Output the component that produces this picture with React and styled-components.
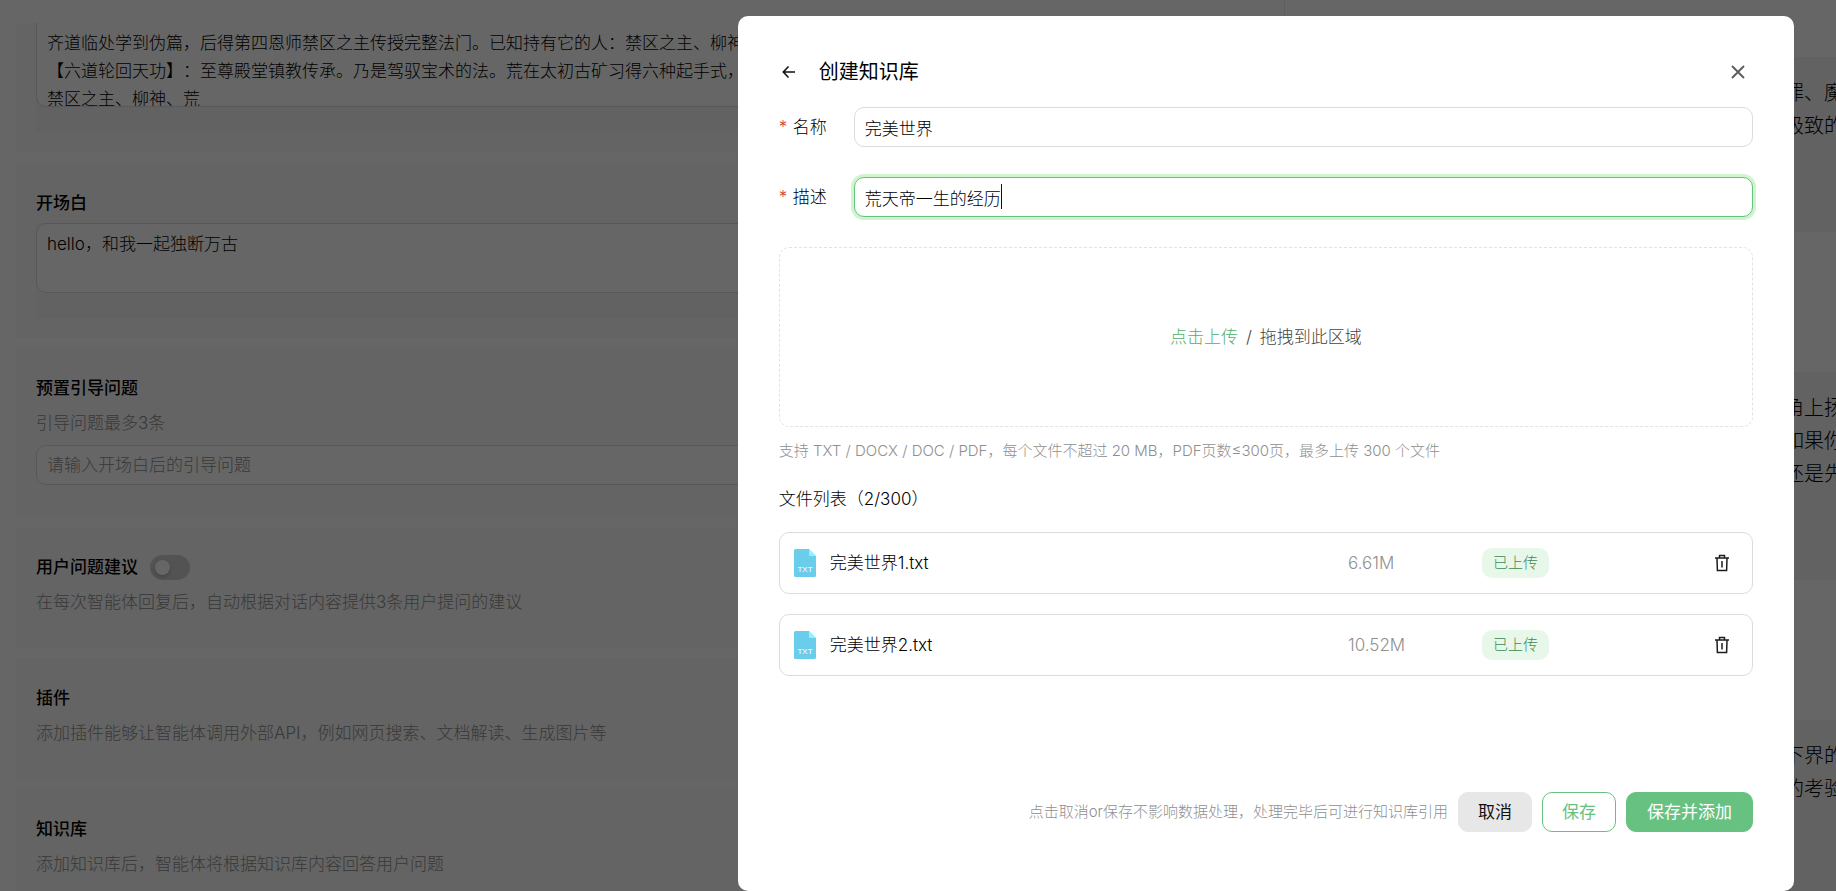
import React, { useEffect, useRef, useState } from "react";
import styled, { createGlobalStyle } from "styled-components";

const openingSetting = [
  "人，其他至尊殿堂的传承者亦有所得，但皆是残篇，后来荒于仙古遗地之中寻回。此法为至高秘术，",
  "齐道临处学到伪篇，后得第四恩师禁区之主传授完整法门。已知持有它的人：禁区之主、柳神、荒",
  "【六道轮回天功】：至尊殿堂镇教传承。乃是驾驭宝术的法。荒在太初古矿习得六种起手式，",
  "禁区之主、柳神、荒",
].join("\n");

const messages = [
  ["罪、魔", "极致的"],
  ["角上扬", "如果你", "还是先"],
  ["下界的", "的考验"],
];

const initialFiles = [
  { id: 1, name: "完美世界1.txt", size: "6.61M" },
  { id: 2, name: "完美世界2.txt", size: "10.52M" },
];

const TxtIcon = () => (
  <svg width="22" height="30" viewBox="0 0 22 30" aria-hidden="true">
    <path
      d="M1.500 1H15l7 7v19.500a1.500 1.500 0 0 1-1.500 1.500h-19A1.500 1.500 0 0 1 0 27.500v-25A1.500 1.500 0 0 1 1.500 1z"
      fill="#6bcdec"
    />
    <path d="M15 1l7 7h-5.500A1.500 1.500 0 0 1 15 6.500z" fill="#98f0ff" />
    <text
      x="11"
      y="24"
      fill="#fff"
      fontSize="8"
      fontWeight="400"
      textAnchor="middle"
      fontFamily="Liberation Sans"
    >
      TXT
    </text>
  </svg>
);

const TrashIcon = () => (
  <svg
    width="16"
    height="18"
    viewBox="0 0 16 18"
    fill="none"
    stroke="#1d1d1f"
    strokeWidth="1.500"
    aria-hidden="true"
  >
    <path d="M1 4h14M5.500 3.500V1.500h5v2M3 4.500l.4 12h9.200l.4-12M8 7v6.500" />
  </svg>
);

const BackIcon = () => (
  <svg
    width="14"
    height="14"
    viewBox="0 0 14 14"
    fill="none"
    stroke="#111"
    strokeWidth="1.600"
    aria-hidden="true"
  >
    <path d="M13 7H1.500M6.500 1.500L1.300 7l5.200 5.500" />
  </svg>
);

const CloseIcon = () => (
  <svg
    width="14"
    height="14"
    viewBox="0 0 14 14"
    fill="none"
    stroke="#5c5c5c"
    strokeWidth="1.900"
    aria-hidden="true"
  >
    <path d="M1 1l12 12M13 1L1 13" />
  </svg>
);

const SettingsPanel = () => {
  const settingRef = useRef(null);

  // leave the last line half hidden behind the bottom edge
  useEffect(() => {
    const area = settingRef.current;
    area.scrollTop = area.scrollHeight - area.clientHeight - 7;
  }, []);

  return (
    <Settings>
      <Card>
        <Field>
          <SettingText
            ref={settingRef}
            aria-label="设定"
            defaultValue={openingSetting}
          />
        </Field>
      </Card>
      <Card $bottom={20}>
        <CardTitle as="label" htmlFor="opening">
          开场白
        </CardTitle>
        <Field $spaced>
          <OpeningText id="opening" defaultValue="hello，和我一起独断万古" />
        </Field>
      </Card>
      <Card $bottom={32}>
        <CardTitle as="label" htmlFor="guide">
          预置引导问题
        </CardTitle>
        <CardNote>引导问题最多3条</CardNote>
        <GuideInput id="guide" placeholder="请输入开场白后的引导问题" />
      </Card>
      <Card $bottom={32}>
        <TitleRow>
          <CardTitle as="label" htmlFor="suggest">
            用户问题建议
          </CardTitle>
          <Switch id="suggest" type="checkbox" role="switch" />
        </TitleRow>
        <CardNote>
          在每次智能体回复后，自动根据对话内容提供3条用户提问的建议
        </CardNote>
      </Card>
      <Card $bottom={32}>
        <CardTitle>插件</CardTitle>
        <CardNote>
          添加插件能够让智能体调用外部API，例如网页搜索、文档解读、生成图片等
        </CardNote>
      </Card>
      <Card $bottom={32}>
        <CardTitle>知识库</CardTitle>
        <CardNote>添加知识库后，智能体将根据知识库内容回答用户问题</CardNote>
      </Card>
    </Settings>
  );
};

const CreateDialog = () => {
  const [name, setName] = useState("完美世界");
  const [desc, setDesc] = useState("荒天帝一生的经历");
  const [files, setFiles] = useState(initialFiles);
  const descRef = useRef(null);

  useEffect(() => {
    const input = descRef.current;
    input.focus();
    input.setSelectionRange(input.value.length, input.value.length);
  }, []);

  return (
    <Dialog role="dialog" aria-modal="true" aria-labelledby="dialog-title">
      <Header>
        <IconButton aria-label="返回">
          <BackIcon />
        </IconButton>
        <h2 id="dialog-title">创建知识库</h2>
        <IconButton aria-label="关闭" $wide>
          <CloseIcon />
        </IconButton>
      </Header>
      <FormRow>
        <Label htmlFor="kb-name">名称</Label>
        <InputBox>
          <TextInput
            id="kb-name"
            value={name}
            onChange={(e) => setName(e.target.value)}
          />
        </InputBox>
      </FormRow>
      <FormRow>
        <Label htmlFor="kb-desc">描述</Label>
        <InputBox>
          <TextInput
            id="kb-desc"
            ref={descRef}
            value={desc}
            onChange={(e) => setDesc(e.target.value)}
          />
          <Caret style={{ left: 11 + desc.length * 17 }} />
        </InputBox>
      </FormRow>
      <DropZone>
        <strong>点击上传</strong>
        <span>/</span>
        <span>拖拽到此区域</span>
      </DropZone>
      <UploadHint>
        支持 TXT / DOCX / DOC / PDF，每个文件不超过 20
        MB，PDF页数≤300页，最多上传 300 个文件
      </UploadHint>
      <ListTitle>文件列表（{files.length}/300）</ListTitle>
      <FileList>
        {files.map((file) => (
          <FileRow key={file.id}>
            <FileName>
              <TxtIcon />
              {file.name}
            </FileName>
            <FileSize>{file.size}</FileSize>
            <Status>已上传</Status>
            <IconButton
              aria-label="删除"
              onClick={() => setFiles(files.filter((f) => f.id !== file.id))}
            >
              <TrashIcon />
            </IconButton>
          </FileRow>
        ))}
      </FileList>
      <Footer>
        <Hint>点击取消or保存不影响数据处理，处理完毕后可进行知识库引用</Hint>
        <Button>取消</Button>
        <Button $variant="outline">保存</Button>
        <Button $variant="primary">保存并添加</Button>
      </Footer>
    </Dialog>
  );
};

const App = () => {
  return (
    <>
      <GlobalStyle />
      <Page>
        <SettingsPanel />
        <Chat>
          {messages.map((lines) => (
            <Bubble key={lines[0]} $lines={lines.length}>
              {lines.map((line) => (
                <p key={line}>{line}</p>
              ))}
            </Bubble>
          ))}
        </Chat>
      </Page>
      <Overlay>
        <CreateDialog />
      </Overlay>
    </>
  );
};

const GlobalStyle = createGlobalStyle`
  * {
    box-sizing: border-box;
  }
  body {
    margin: 0;
    overflow: hidden;
    background: #fff;
  }
  body, input, textarea, button {
    font-family: Inter, "Noto Sans CJK SC", sans-serif;
    font-size: 17px;
    font-weight: 300;
    line-height: 28px;
    text-spacing-trim: space-all;
    color: #000;
  }
  h2, h3, p, ul {
    margin: 0;
    padding: 0;
  }
`;

const Page = styled.div`
  height: 100vh;
  display: grid;
  grid-template-columns: 7fr 3fr;
  overflow: hidden;
`;

const Settings = styled.main`
  padding: 23px 16px 0;
  display: flex;
  flex-direction: column;
  gap: 10px;
  overflow: hidden;
  border-right: 1px solid #ececec;
`;

const Card = styled.section`
  flex: none;
  padding: ${(props) =>
    props.$bottom ? `26px 20px ${props.$bottom}px` : "0 20px 21px"};
  background: #fafafa;
`;

const CardTitle = styled.h3`
  display: block;
  font-size: 17px;
  font-weight: 500;
  line-height: 28px;
  color: #000;
`;

const CardNote = styled.p`
  margin-top: 7px;
  color: #8f8f8f;
`;

const TitleRow = styled.div`
  display: flex;
  align-items: center;
  gap: 12px;
`;

const Field = styled.div`
  margin-top: ${(props) => (props.$spaced ? 6 : 0)}px;
  padding-bottom: 25px;
  background: #f5f5f5;
`;

const SettingText = styled.textarea`
  display: block;
  width: 100%;
  height: 84px;
  padding: 0 10px;
  border: 1px solid #dcdcdc;
  border-top: 0;
  border-radius: 0 0 10px 10px;
  resize: none;
  overflow: hidden;
  white-space: pre;
`;

const OpeningText = styled.textarea`
  display: block;
  width: 100%;
  height: 70px;
  padding: 6px 10px;
  border: 1px solid #dcdcdc;
  border-radius: 10px;
  resize: none;
`;

const GuideInput = styled.input`
  width: 100%;
  height: 40px;
  margin-top: 8px;
  padding: 0 10px;
  border: 1px solid #dcdcdc;
  border-radius: 10px;
  background: #fff;

  &::placeholder {
    color: #8f8f8f;
  }
`;

const Switch = styled.input`
  appearance: none;
  display: flex;
  align-items: center;
  width: 40px;
  height: 25px;
  margin: 0;
  padding: 0 5px;
  border-radius: 13px;
  background: #d0d0d0;

  &::before {
    content: "";
    width: 15px;
    height: 15px;
    border-radius: 50%;
    background: #fff;
    box-shadow: 0 2px 4px rgba(0, 0, 0, 0.2);
  }
`;

const Chat = styled.aside`
  padding-top: 57px;
  display: flex;
  flex-direction: column;
  gap: 140px;
  overflow: hidden;
`;

const Bubble = styled.article`
  flex: none;
  height: ${(props) => (props.$lines === 3 ? 208 : 175)}px;
  padding-top: 20px;
  background: #f4f4f4;

  p {
    margin-right: -8px;
    font-size: 20px;
    line-height: 33px;
    text-align: right;
  }
`;

const Overlay = styled.div`
  position: fixed;
  inset: 0;
  display: grid;
  padding: 16px 42px 0 calc(41vw - 15px);
  background: rgba(0, 0, 0, 0.6);
`;

const Dialog = styled.div`
  display: flex;
  flex-direction: column;
  padding: 41px 41px 59px;
  border-radius: 10px;
  background: #fff;
`;

const Header = styled.header`
  display: flex;
  align-items: center;
  height: 30px;
  margin-bottom: 20px;

  h2 {
    flex: 1;
    margin-left: 20px;
    font-size: 20px;
    font-weight: 400;
    line-height: 30px;
  }
`;

const IconButton = styled.button`
  display: flex;
  align-items: center;
  justify-content: center;
  width: ${(props) => (props.$wide ? 30 : 20)}px;
  height: 30px;
  padding: 0;
  border: 0;
  background: none;
  cursor: pointer;
`;

const FormRow = styled.div`
  display: flex;
  align-items: center;
  margin-bottom: 30px;
`;

const Label = styled.label`
  width: 75px;

  &::before {
    content: "*";
    display: inline-block;
    width: 14px;
    color: #d0463b;
  }
`;

const InputBox = styled.div`
  position: relative;
  flex: 1;
  min-width: 0;
`;

const TextInput = styled.input`
  display: block;
  width: 100%;
  height: 40px;
  padding: 0 10px;
  border: 1px solid #dcdcdc;
  border-radius: 10px;
  outline: none;
  caret-color: transparent;

  &:focus {
    border-color: #67c281;
    box-shadow: 0 0 0 3px #cff5cc;
  }
`;

const Caret = styled.i`
  position: absolute;
  top: 7px;
  width: 1px;
  height: 25px;
  background: #111;
`;

const DropZone = styled.div`
  display: flex;
  align-items: center;
  justify-content: center;
  gap: 8px;
  height: 180px;
  border: 1px dashed #e2e2e2;
  border-radius: 10px;
  color: #444;
  cursor: pointer;

  strong {
    font-weight: 300;
    color: #4fae6a;
  }
`;

const Hint = styled.p`
  font-size: 15px;
  line-height: 24px;
  color: #8f8f8f;
`;

const UploadHint = styled(Hint)`
  margin-top: 12px;
`;

const ListTitle = styled.h3`
  margin: 22px 0 19px;
  font-size: 17px;
  font-weight: 300;
  line-height: 28px;
`;

const FileList = styled.ul`
  display: flex;
  flex-direction: column;
  gap: 20px;
  list-style: none;
`;

const FileRow = styled.li`
  display: grid;
  grid-template-columns: 1fr 134px 230px 20px;
  align-items: center;
  height: 62px;
  padding: 0 20px 0 14px;
  border: 1px solid #dcdcdc;
  border-radius: 10px;
`;

const FileName = styled.div`
  display: flex;
  align-items: center;
  gap: 14px;
`;

const FileSize = styled.span`
  color: #8f8f8f;
`;

const Status = styled.span`
  justify-self: start;
  padding: 3px 11px;
  border-radius: 10px;
  background: #e7f7ea;
  font-size: 15px;
  line-height: 24px;
  color: #3c8a54;
`;

const Footer = styled.footer`
  display: flex;
  align-items: center;
  justify-content: flex-end;
  gap: 10px;
  margin-top: auto;
`;

const buttonColors = {
  primary: "background: #67c281; border-color: #67c281; color: #fff;",
  outline: "background: #fff; border-color: #67c281; color: #67c281;",
  plain: "background: #e7e7e7; border-color: #e7e7e7; color: #111;",
};

const Button = styled.button`
  height: 40px;
  padding: 0 ${(props) => (props.$variant === "primary" ? 20 : 19)}px;
  border: 1px solid;
  border-radius: 10px;
  font-weight: 400;
  cursor: pointer;
  ${(props) => buttonColors[props.$variant || "plain"]}
`;

export default App;
